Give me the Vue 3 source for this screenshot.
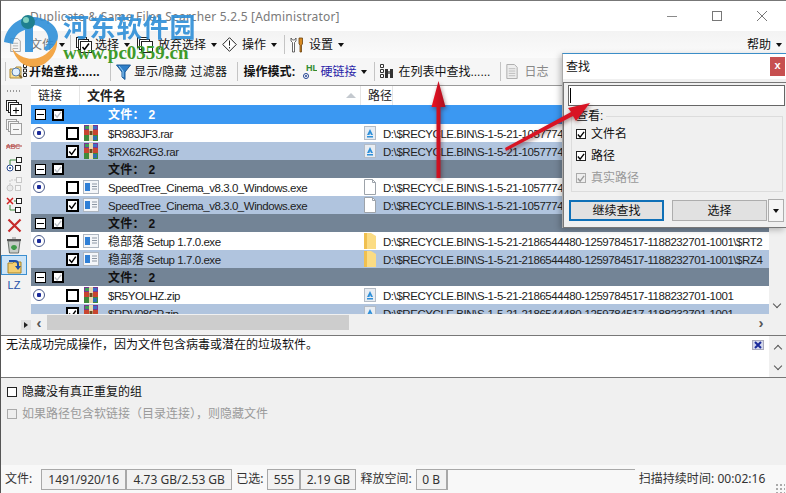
<template>
  <div class="win">
    <svg class="defs" width="0" height="0">
      <symbol id="i-rar" viewBox="0 0 16 16">
        <rect x="1" y="0" width="14" height="5" fill="#7a3590" />
        <rect x="1" y="5" width="14" height="5" fill="#c8452f" />
        <rect x="1" y="10" width="14" height="6" fill="#3f8a3a" />
        <rect x="2" y="1" width="4" height="3" fill="#3d9a58" />
        <rect x="10" y="1" width="4" height="3" fill="#3d6fc4" />
        <rect x="10" y="11" width="4" height="4" fill="#2f6fb0" />
        <rect x="6" y="0" width="4" height="16" fill="#e8d8b0" />
        <rect x="6.5" y="6" width="3" height="4" fill="#6b4a20" />
      </symbol>
      <symbol id="i-exe" viewBox="0 0 16 16">
        <rect x="0.5" y="1.5" width="15" height="13" fill="#f4f6f9" stroke="#aeb6c0" />
        <rect x="2" y="4" width="5" height="8" fill="#2f7fd6" />
        <path d="M9 5h5M9 7.5h5M9 10h5" stroke="#8c96a3" />
      </symbol>
      <symbol id="i-bin" viewBox="0 0 12 14">
        <rect x="0.5" y="0.5" width="11" height="13" fill="#e8edf3" stroke="#b4bcc6" />
        <path d="M6 3L3 9h2.500L6 7l1 2h2z M3 10h6v1.400H3z" fill="#2f8fd8" />
      </symbol>
      <symbol id="i-doc" viewBox="0 0 12 16">
        <path d="M.5.5h8l3 3v12H.5z" fill="#fff" stroke="#9da3aa" />
        <path d="M8.500.5v3h3" fill="none" stroke="#9da3aa" />
      </symbol>
      <symbol id="i-folder" viewBox="0 0 12 16">
        <path d="M0 0h7l5 3v13H0z" fill="#fbdc84" />
        <path d="M0 0h3v16H0z" fill="#f0c050" />
      </symbol>
      <symbol id="i-stack" viewBox="0 0 16 16">
        <rect x="0.5" y="0.5" width="10" height="10" fill="#fff" stroke="#222" />
        <rect x="2.500" y="2.500" width="10" height="10" fill="#fff" stroke="#222" />
        <rect x="4.500" y="4.500" width="11" height="11" fill="#fff" stroke="#222" />
      </symbol>
    </svg>

    <header class="titlebar">
      <span class="title">Duplicate &amp; Same Files Searcher 5.2.5 [Administrator]</span>
      <div class="win-btns">
        <svg width="12" height="12" viewBox="0 0 12 12"><path d="M1 6.500h10" stroke="#8a8a8a" /></svg>
        <svg width="12" height="12" viewBox="0 0 12 12"><rect x="1.500" y="1.500" width="9" height="9" fill="none" stroke="#777" /></svg>
        <svg width="12" height="12" viewBox="0 0 12 12"><path d="M1 1l10 10M11 1L1 11" stroke="#777" /></svg>
      </div>
    </header>

    <nav class="menubar">
      <div class="mi mi-tight">
        <svg width="11" height="14" viewBox="0 0 12 16"><path d="M.5.5h8l3 3v12H.5z" fill="#f5f5f5" stroke="#999" /><path d="M3 6h6M3 9h6M3 12h6" stroke="#aaa" /></svg>
        <span class="dim">文件</span><i class="caret"></i>
      </div>
      <b class="sep"></b>
      <div class="mi">
        <svg width="16" height="16" viewBox="0 0 16 16"><use href="#i-stack" /><path d="M6.500 10l2 2.500 4.500-6" fill="none" stroke="#000" stroke-width="1.500" /></svg>
        <span>选择</span><i class="caret"></i>
      </div>
      <div class="mi mi-tight">
        <svg width="16" height="16" viewBox="0 0 16 16"><use href="#i-stack" /></svg>
        <span class="wide-gap">放弃选择</span><i class="caret"></i>
      </div>
      <div class="mi">
        <svg width="15" height="15" viewBox="0 0 15 15"><path d="M7.500.7l6.800 6.800-6.800 6.800L.7 7.500z" fill="#fff" stroke="#222" /><path d="M7.500 3.500v5.200M7.500 10v1.400" stroke="#222" /></svg>
        <span class="wide-gap">操作</span><i class="caret"></i>
      </div>
      <b class="sep"></b>
      <div class="mi">
        <svg width="14" height="16" viewBox="0 0 14 16"><path d="M1 1v3l1.500 1.500V15h2V5.500L6 4V1L4.500 3h-2z" fill="#fff" stroke="#444" stroke-width=".8" /><path d="M9 1h3.500v6L11.500 8v7h-1.500V8L9 7z" fill="#d98a20" stroke="#6a4210" stroke-width=".8" /></svg>
        <span class="wide-gap">设置</span><i class="caret"></i>
      </div>
      <div class="mi mi-help"><span>帮助</span><i class="caret"></i></div>
    </nav>

    <div class="toolbar">
      <b class="sep"></b>
      <div class="ti ti-first">
        <svg width="18" height="16" viewBox="0 0 18 16"><path d="M1 5h5l1-2h5v11H1z" fill="#f6dc90" stroke="#b08a30" /><circle cx="7" cy="8" r="4" fill="#dff0ff" stroke="#5b7fa8" /><path d="M10 11l3 3" stroke="#8a6a30" stroke-width="2" /><path d="M14.500.5h3v3h-3zM14.500 5h3v3h-3zM14.500 9.500h3v3h-3z" fill="#fff" stroke="#222" /></svg>
        <span class="bold">开始查找......</span>
      </div>
      <b class="sep"></b>
      <div class="ti">
        <svg width="15" height="16" viewBox="0 0 15 16"><path d="M.5 1h14L9 8v7.500L6 13V8z" fill="#2f7fc8" stroke="#1c5a96" /><path d="M3 2l4 5v6" fill="none" stroke="#9cd0f5" /></svg>
        <span class="spread">显示/隐藏 过滤器</span>
      </div>
      <b class="sep"></b>
      <div class="ti ti-mode">
        <span class="bold">操作模式:</span>
        <svg class="hl" width="14" height="17" viewBox="0 0 14 17"><text x="3" y="8" class="hl-text">HL</text><circle cx="3" cy="13" r="2.500" fill="#fff" stroke="#1f3f8f" /><circle cx="3" cy="13" r="1" fill="#1f3f8f" /></svg>
        <span class="link">硬链接</span><i class="caret"></i>
      </div>
      <b class="sep"></b>
      <div class="ti">
        <svg width="15" height="15" viewBox="0 0 15 15"><path d="M.5.500h3v3h-3zM.5 5.500h3v3h-3zM.5 10.500h3v3h-3z" fill="#fff" stroke="#333" /><path d="M5 5h3v9H5zM10 5h3v9h-3z" fill="#333" /><path d="M8 7h2v3H8z" fill="#777" /></svg>
        <span>在列表中查找......</span>
      </div>
      <b class="sep"></b>
      <div class="ti ti-off">
        <svg width="12" height="15" viewBox="0 0 12 16"><path d="M.5.5h8l3 3v12H.5z" fill="#eee" stroke="#aaa" /><path d="M2.500 5h7M2.500 7.500h7M2.500 10h7M2.500 12.500h7" stroke="#bbb" /></svg>
        <span>日志</span>
      </div>
    </div>

    <section class="list-area">
      <aside class="side">
        <div class="dots"></div>
        <div class="tool t19"><svg width="16" height="16" viewBox="0 0 16 16"><use href="#i-stack" /><path d="M10 7.500v6M7 10.500h6" stroke="#000" /></svg></div>
        <div class="tool t19 faded"><svg width="16" height="16" viewBox="0 0 16 16"><use href="#i-stack" /><path d="M7 10.500h6" stroke="#000" /></svg></div>
        <div class="tool t19">
          <svg width="16" height="10" viewBox="0 0 16 10"><text x="0" y="8" class="abc">ABC</text><path d="M0 5h16" stroke="#b04040" /></svg>
        </div>
        <div class="tool">
          <svg width="16" height="16" viewBox="0 0 16 16"><circle cx="4" cy="11" r="3" fill="#fff" stroke="#2a4a8f" /><circle cx="4" cy="11" r="1" fill="#2a4a8f" /><rect x="9.500" y="8.500" width="5" height="5" fill="#fff" stroke="#222" /><rect x="10.500" y=".5" width="5" height="5" fill="#fff" stroke="#222" /><path d="M4 8V3h6" fill="none" stroke="#3a8a3a" /></svg>
        </div>
        <div class="tool faded">
          <svg width="16" height="16" viewBox="0 0 16 16"><circle cx="4" cy="11" r="3" fill="#ddd" stroke="#888" /><rect x="9.500" y="8.500" width="5" height="5" fill="#fff" stroke="#888" /><rect x="10.500" y=".5" width="5" height="5" fill="#fff" stroke="#888" /><path d="M4 8V3h6" fill="none" stroke="#888" stroke-dasharray="2 1" /></svg>
        </div>
        <div class="tool">
          <svg width="16" height="16" viewBox="0 0 16 16"><path d="M1 1l6 6M7 1L1 7" stroke="#d02020" stroke-width="1.500" /><rect x="10.500" y="1.500" width="5" height="5" fill="#fff" stroke="#222" /><rect x="9.500" y="10.500" width="5" height="5" fill="#fff" stroke="#222" /><path d="M4 8v5h5M8 4h2" fill="none" stroke="#3a8a3a" /></svg>
        </div>
        <div class="tool">
          <svg width="15" height="15" viewBox="0 0 15 15"><path d="M1.500 1.500l12 12M13.500 1.500l-12 12" stroke="#c62a2a" stroke-width="2.200" /></svg>
        </div>
        <div class="tool">
          <svg width="16" height="17" viewBox="0 0 16 17"><path d="M2 4h12l-1.500 12h-9z" fill="#c7cdc8" stroke="#6a706c" /><path d="M1 3h14" stroke="#555" stroke-width="2" /><path d="M6 1h4" stroke="#888" /><path d="M5 11a3 3 0 0 1 6 0l-2 2H7z" fill="#3f9a4a" /></svg>
        </div>
        <div class="tool on">
          <svg width="17" height="17" viewBox="0 0 17 17"><path d="M2 6h5l1-1h7v11H2z" fill="#f3cf72" stroke="#a88428" /><path d="M3 4h6a3 3 0 0 1 3 3v3" fill="none" stroke="#1d4fa8" stroke-width="2" /><path d="M9 9h6l-3 4z" fill="#1d4fa8" /></svg>
        </div>
        <div class="tool lz">LZ</div>
        <div class="side-fill"></div>
        <div class="side-toggle"><i></i></div>
      </aside>

      <div class="grid-wrap">
        <div class="grid-main">
          <div class="grid-head">
            <div class="hc hc-link">链接</div>
            <div class="hc hc-name">文件名<i class="sort"></i></div>
            <div class="hc hc-path">路径</div>
          </div>
          <div class="grid-body">
            <template v-for="(row, i) in rows" :key="i">
              <div v-if="row.group" class="row group" :class="{ active: row.active }">
                <span class="box minus"></span>
                <span class="box tick"><svg width="9" height="9" viewBox="0 0 9 9"><path d="M1 4.500l2.500 3L8 1.500" fill="none" stroke="#b9bec4" stroke-width="1.500" /></svg></span>
                <span class="gtext">文件： 2</span>
              </div>
              <div v-else class="row" :class="{ sel: row.checked }">
                <span class="radio-cell"><i v-if="!row.checked" class="radio"></i></span>
                <span class="rcheck">
                  <svg v-if="row.checked" width="11" height="11" viewBox="0 0 11 11"><path d="M1.500 5.500l3 3.500 5-7" fill="none" stroke="#000" stroke-width="1.800" /></svg>
                </span>
                <svg class="ficon" width="16" height="16"><use :href="'#i-' + row.icon" /></svg>
                <span class="fname"><span v-if="row.prefix" class="cjk">{{ row.prefix }}</span>{{ row.name }}</span>
                <svg class="picon" width="12" height="16"><use :href="'#i-' + row.picon" /></svg>
                <span class="fpath">{{ row.path }}</span>
              </div>
            </template>
          </div>
          <div class="hscroll">
            <span class="arrow">‹</span>
            <div class="hthumb"></div>
            <span class="arrow">›</span>
          </div>
        </div>
        <div class="vscroll"><span class="chev down"></span></div>
      </div>
    </section>

    <section class="msg">
      <p>无法成功完成操作，因为文件包含病毒或潜在的垃圾软件。</p>
      <span class="msg-close"><svg width="8" height="8" viewBox="0 0 8 8"><path d="M1 1l6 6M7 1L1 7" stroke="#1a2a9a" stroke-width="2" /></svg></span>
      <div class="msg-scroll"><span class="chev up"></span><span class="chev down"></span></div>
    </section>

    <section class="options">
      <label class="opt"><span class="cb"></span>隐藏没有真正重复的组</label>
      <label class="opt off"><span class="cb"></span>如果路径包含软链接（目录连接），则隐藏文件</label>
    </section>

    <footer class="status">
      <span class="st-label">文件:</span>
      <span class="st-box w-a">1491/920/16</span><span class="st-box w-b">4.73 GB/2.53 GB</span>
      <span class="st-label">已选:</span>
      <span class="st-box w-c">555</span><span class="st-box w-d">2.19 GB</span>
      <span class="st-label">释放空间:</span>
      <span class="st-box w-e">0 B</span><span class="st-box w-f"></span>
      <span class="st-label st-time">扫描持续时间: 00:02:16</span>
      <span class="grip"></span>
    </footer>

    <div class="watermark">
      <svg class="wm-logo" width="58" height="60" viewBox="0 0 58 60">
        <path d="M2 34C4 18 18 8 32 9c14 1 24 10 24 19 0 7-5 13-12 15l-2-3c4-3 5-7 4-12-2-7-9-11-15-11v27h-8V22C15 24 12 30 11 36z" fill="#2e8fd8" opacity=".9" />
        <path d="M10 40c8 12 24 14 34 6 5-4 9-9 11-14 1 10-5 20-15 25-12 5-25 0-30-17z" fill="#f3a748" />
        <circle cx="26" cy="14" r="7" fill="#1e7f8f" />
        <circle cx="24" cy="12" r="3" fill="#7fd0c0" />
      </svg>
      <div class="wm-cn">河东软件园</div>
      <div class="wm-url">www.pc0359.cn</div>
    </div>

    <div class="dialog">
      <div class="dlg-title">
        <span>查找</span>
        <span class="dlg-close">x</span>
      </div>
      <div class="dlg-body">
        <div class="dlg-input"><i></i></div>
        <fieldset class="dlg-group">
          <legend>查看:</legend>
          <label class="dlg-check"><span class="cb on"><svg width="9" height="9" viewBox="0 0 9 9"><path d="M1 4.500l2.500 3L8 1.500" fill="none" stroke="#000" stroke-width="1.500" /></svg></span>文件名</label>
          <label class="dlg-check"><span class="cb on"><svg width="9" height="9" viewBox="0 0 9 9"><path d="M1 4.500l2.500 3L8 1.500" fill="none" stroke="#000" stroke-width="1.500" /></svg></span>路径</label>
          <label class="dlg-check off"><span class="cb on"><svg width="9" height="9" viewBox="0 0 9 9"><path d="M1 4.500l2.500 3L8 1.500" fill="none" stroke="#999" stroke-width="1.500" /></svg></span>真实路径</label>
        </fieldset>
        <div class="dlg-btns">
          <button class="btn primary">继续查找</button>
          <button class="btn">选择</button>
          <button class="btn-drop"><i class="caret"></i></button>
        </div>
      </div>
    </div>

    <svg class="arrows" width="786" height="493" viewBox="0 0 786 493">
      <defs>
        <linearGradient id="red-v" x1="0" x2="1" y1="0" y2="0">
          <stop offset="0" stop-color="#f01020" />
          <stop offset="1" stop-color="#a81020" />
        </linearGradient>
      </defs>
      <g class="shade">
        <path d="M436.500 178V107h-5l7-26 7 26h-5v71z" fill="url(#red-v)" />
        <path d="M505 148l66-36-3-4 22-5-14 18-3-5-67 35z" fill="#d81424" />
      </g>
    </svg>
  </div>
</template>

<script setup>
const oldBase = 'D:\\$RECYCLE.BIN\\S-1-5-21-1057774'
const newBase = 'D:\\$RECYCLE.BIN\\S-1-5-21-2186544480-1259784517-1188232701-1001'

const rows = [
  { group: true, active: true },
  { name: '$R983JF3.rar', icon: 'rar', picon: 'bin', path: oldBase },
  { name: '$RX62RG3.rar', icon: 'rar', picon: 'bin', path: oldBase, checked: true },
  { group: true },
  { name: 'SpeedTree_Cinema_v8.3.0_Windows.exe', icon: 'exe', picon: 'doc', path: oldBase },
  { name: 'SpeedTree_Cinema_v8.3.0_Windows.exe', icon: 'exe', picon: 'doc', path: oldBase, checked: true },
  { group: true },
  { prefix: '稳部落', name: ' Setup 1.7.0.exe', icon: 'exe', picon: 'folder', path: newBase + '\\$RT2' },
  { prefix: '稳部落', name: ' Setup 1.7.0.exe', icon: 'exe', picon: 'folder', path: newBase + '\\$RZ4', checked: true },
  { group: true },
  { name: '$R5YOLHZ.zip', icon: 'rar', picon: 'bin', path: newBase },
  { name: '$RDV08CP.zip', icon: 'rar', picon: 'bin', path: newBase, checked: true }
]
</script>

<style>
html,
body {
  margin: 0;
  padding: 0;
  overflow: hidden;
  background: #f0f0f0;
}
</style>

<style scoped>
.win {
  position: relative;
  width: 786px;
  height: 493px;
  overflow: hidden;
  display: flex;
  flex-direction: column;
  box-sizing: border-box;
  border-left: 1px solid #555;
  border-top: 1px solid #777;
  background: #f0f0f0;
  color: #111;
  font: 12px/16px "Liberation Sans", "Noto Sans CJK SC", sans-serif;
}

.defs {
  position: absolute;
}

.titlebar {
  height: 30px;
  flex: none;
  display: flex;
  align-items: center;
  justify-content: space-between;
  background: #fff;
  padding-left: 29px;
}

.title {
  color: #7a7a7a;
  font-family: "Noto Sans", "Noto Sans CJK SC", sans-serif;
  font-size: 12px;
  letter-spacing: 0.19px;
  padding-top: 1px;
}

.win-btns {
  display: flex;
  gap: 33px;
  padding-right: 18px;
}

.menubar {
  height: 27px;
  flex: none;
  display: flex;
  align-items: center;
  padding-left: 9px;
  background: linear-gradient(#f3f3f3, #fbfbfb);
}

.mi {
  display: flex;
  align-items: center;
  gap: 3px;
  margin-right: 7px;
}

.mi-tight {
  margin-right: 5px;
}

.dim {
  color: #777;
  margin-left: 6px;
}

.wide-gap {
  margin-left: 2px;
}

.mi-help {
  margin: 0 4px 0 auto;
}

.caret {
  display: inline-block;
  width: 0;
  height: 0;
  margin-left: 2px;
  border: 3.500px solid transparent;
  border-top: 4px solid #111;
  border-bottom: 0;
}

.sep {
  width: 1px;
  height: 19px;
  background: #c4c4c4;
  margin: 0 5px 0 0;
}

.toolbar {
  height: 27px;
  flex: none;
  display: flex;
  align-items: center;
  padding-left: 4px;
  background: #f6f6f6;
}

.ti {
  display: flex;
  align-items: center;
  gap: 3px;
  margin-right: 10px;
}

.ti-first {
  gap: 2px;
  margin-left: -2px;
}

.ti-first .bold {
  letter-spacing: 0.3px;
}

.ti-mode {
  margin-right: 7px;
}

.spread {
  letter-spacing: 0.3px;
}

.bold {
  font-weight: 700;
}

.link {
  color: #2a1fa8;
}

.hl {
  margin-left: 5px;
}

.hl-text {
  font: 700 9px "Liberation Sans", sans-serif;
  fill: #2f8a2f;
}

.ti-off {
  color: #888;
  gap: 6px;
}

.list-area {
  height: 248px;
  flex: none;
  display: flex;
}

.side {
  width: 30px;
  flex: none;
  display: flex;
  flex-direction: column;
  align-items: center;
  background: #f2f2f2;
}

.dots {
  width: 14px;
  height: 2px;
  margin: 5px 5px 6px 0;
  background: repeating-linear-gradient(90deg, #999 0 1px, transparent 1px 3px);
}

.tool {
  width: 26px;
  height: 20px;
  flex: none;
  margin-right: 4px;
  display: flex;
  align-items: center;
  justify-content: center;
  box-sizing: border-box;
}

.t19 {
  height: 19px;
}

.faded {
  opacity: 0.4;
}

.on {
  background: #cce4f7;
  border: 1px solid #3c8fd0;
}

.abc {
  font: 400 7px "Liberation Sans", sans-serif;
  fill: #b04040;
}

.lz {
  color: #1f4fa8;
  font-size: 11px;
  font-family: "Liberation Sans", sans-serif;
}

.side-fill {
  flex: 1;
}

.side-toggle {
  align-self: flex-end;
  width: 10px;
  height: 10px;
  margin-bottom: 3px;
  background: #e0e0e0;
  display: flex;
  align-items: center;
  justify-content: center;
}

.side-toggle i {
  width: 0;
  height: 0;
  border: 3px solid transparent;
  border-left: 4px solid #222;
  border-right: 0;
}

.grid-wrap {
  flex: 1;
  min-width: 0;
  display: flex;
}

.grid-main {
  width: 738px;
  flex: none;
  display: flex;
  flex-direction: column;
}

.grid-head {
  height: 20px;
  flex: none;
  display: flex;
  background: #fff;
  box-sizing: border-box;
  border-top: 1px solid #999;
  align-items: center;
  color: #222;
}

.hc {
  height: 100%;
  box-sizing: border-box;
  padding-left: 7px;
  border-right: 1px solid #e5e5e5;
  display: flex;
  align-items: center;
}

.hc-link {
  width: 49px;
}

.hc-name {
  width: 281px;
  font-weight: 700;
  font-size: 13px;
  position: relative;
}

.sort {
  position: absolute;
  right: 4px;
  top: 7px;
  width: 0;
  height: 0;
  border: 5px solid transparent;
  border-bottom: 5px solid #c4c9cf;
  border-top: 0;
}

.grid-body {
  height: 209px;
  flex: none;
  overflow: hidden;
  background: #fff;
}

.row {
  height: 18px;
  display: flex;
  align-items: center;
  white-space: pre;
  color: #222;
}

.row.sel {
  background: #b0c4de;
}

.row.group {
  background: #738496;
  color: #111;
}

.row.group.active {
  height: 19px;
  background: #3b98f2;
  color: #fff;
}

.box {
  width: 11px;
  height: 11px;
  box-sizing: border-box;
  border: 1px solid #000;
  background: #fff;
  flex: none;
  display: flex;
  align-items: center;
  justify-content: center;
}

.minus {
  margin-left: 4px;
  position: relative;
}

.minus::after {
  content: "";
  width: 7px;
  height: 1px;
  background: #000;
}

.tick {
  width: 12px;
  height: 12px;
  margin-left: 6px;
  border-width: 2px;
}

.gtext {
  margin-left: 44px;
  font-weight: 700;
  letter-spacing: 0.3px;
  padding-top: 1px;
}

.radio-cell {
  width: 35px;
  flex: none;
  display: flex;
  padding-left: 2px;
  box-sizing: border-box;
}

.radio {
  width: 12px;
  height: 12px;
  box-sizing: border-box;
  border-radius: 50%;
  border: 1px solid #4a5a8a;
  background: radial-gradient(circle, #1a2a9a 0 2px, #fff 2.500px);
}

.rcheck {
  width: 13px;
  height: 13px;
  flex: none;
  box-sizing: border-box;
  border: 2px solid #000;
  background: #fff;
  display: flex;
  align-items: center;
  justify-content: center;
}

.ficon {
  margin-left: 4px;
  flex: none;
}

.fname {
  width: 253px;
  flex: none;
  margin-left: 9px;
  padding-top: 1px;
  font-size: 11.500px;
  letter-spacing: -0.45px;
}

.cjk {
  font-size: 12px;
  letter-spacing: 0;
}

.picon {
  flex: none;
  margin-left: 3px;
}

.fpath {
  margin-left: 7px;
  padding-top: 1px;
  font-size: 11.500px;
  letter-spacing: -0.44px;
}

.hscroll {
  height: 19px;
  flex: none;
  display: flex;
  align-items: flex-start;
  padding-top: 1px;
  box-sizing: border-box;
  background: #f0f0f0;
  color: #555;
}

.arrow {
  width: 16px;
  text-align: center;
  font-weight: 700;
  font-size: 15px;
}

.hthumb {
  width: 302px;
  height: 15px;
  background: #cdcdcd;
  margin-right: auto;
}

.vscroll {
  flex: 1;
  position: relative;
  background: #f0f0f0;
}

.vscroll .chev {
  position: absolute;
  left: 5px;
  top: 216px;
}

.chev {
  display: block;
  width: 5px;
  height: 5px;
  border-left: 1.500px solid #555;
  border-bottom: 1.500px solid #555;
}

.chev.down {
  transform: rotate(-45deg);
}

.chev.up {
  transform: rotate(135deg);
}

.msg {
  height: 43px;
  flex: none;
  margin-top: 2px;
  box-sizing: border-box;
  border-top: 1px solid #777;
  border-bottom: 1px solid #777;
  background: #fff;
  display: flex;
  position: relative;
}

.msg p {
  margin: 0;
  padding: 1px 0 0 5px;
  flex: 1;
}

.msg-close {
  position: absolute;
  right: 22px;
  top: 4px;
  width: 12px;
  height: 10px;
  background: #d4d8ec;
  border: 1px solid #aab;
  box-sizing: border-box;
  display: flex;
  align-items: center;
  justify-content: center;
}

.msg-scroll {
  width: 17px;
  background: #f0f0f0;
  display: flex;
  flex-direction: column;
  align-items: center;
  justify-content: space-between;
  padding: 10px 0 8px;
  box-sizing: border-box;
}

.options {
  flex: 1;
  display: flex;
  flex-direction: column;
  gap: 6px;
  padding: 6px 0 0 6px;
}

.opt {
  display: flex;
  align-items: center;
  gap: 5px;
}

.opt.off {
  color: #9a9a9a;
}

.cb {
  width: 10px;
  height: 10px;
  box-sizing: border-box;
  border: 1px solid #222;
  background: #fff;
  flex: none;
  display: flex;
  align-items: center;
  justify-content: center;
}

.off .cb {
  border-color: #aaa;
  background: #eee;
}

.status {
  height: 28px;
  flex: none;
  display: flex;
  align-items: center;
  padding-left: 4px;
  background: #f8f8f8;
  font-family: "Noto Sans", "Noto Sans CJK SC", sans-serif;
  color: #333;
}

.st-label {
  margin-right: 4px;
}

.st-box {
  height: 21px;
  box-sizing: border-box;
  border: 1px solid #a8a8a8;
  background: #f2f2f2;
  line-height: 19px;
  text-align: center;
}

.w-a {
  width: 85px;
  margin-left: 5px;
}

.w-b {
  width: 106px;
  margin-right: 4px;
}

.w-c {
  width: 33px;
}

.w-d {
  width: 56px;
  margin-right: 4px;
}

.w-e {
  width: 31px;
}

.w-f {
  width: 188px;
  background: #f8f8f8;
  border-right: 0;
  border-bottom: 0;
  margin-right: 4px;
}

.st-time {
  margin-right: 0;
  letter-spacing: 0.05px;
}

.grip {
  margin-left: auto;
  margin-right: 1px;
  align-self: flex-end;
  width: 10px;
  height: 10px;
  background: radial-gradient(circle, #aaa 1px, transparent 1.200px) 0 0 / 4px 4px;
}

.watermark {
  position: absolute;
  left: 1px;
  top: 7px;
  width: 200px;
  height: 60px;
  pointer-events: none;
}

.wm-logo {
  position: absolute;
  left: 0;
  top: 0;
}

.wm-cn {
  position: absolute;
  left: 61px;
  top: 4px;
  color: #2e8fd8;
  opacity: 0.9;
  font: 700 26px/28px "Noto Sans CJK SC", sans-serif;
  letter-spacing: 0.6px;
}

.wm-url {
  position: absolute;
  left: 61px;
  top: 36px;
  color: #3f9a2a;
  font: 700 19px/18px "Liberation Serif", serif;
}

.dialog {
  position: absolute;
  left: 561px;
  top: 52px;
  width: 224px;
  height: 175px;
  box-sizing: border-box;
  border-top: 1px solid #3b8ec8;
  border-left: 1px solid #aaa;
  background: #f0f0f0;
  box-shadow: -2px 2px 6px rgba(0, 0, 0, 0.25);
}

.dlg-title {
  height: 25px;
  background: #fff;
  display: flex;
  align-items: center;
  justify-content: space-between;
  padding-left: 3px;
}

.dlg-close {
  width: 15px;
  height: 19px;
  margin-right: 1px;
  background: #c75050;
  color: #fff;
  text-align: center;
  font-weight: 700;
  font-size: 11px;
  line-height: 17px;
}

.dlg-body {
  margin-top: 3px;
  height: 146px;
  box-sizing: border-box;
  border-left: 1px solid #777;
  border-top: 1px solid #777;
  border-bottom: 1px solid #777;
  padding: 2px 1px 0 4px;
}

.dlg-input {
  height: 21px;
  box-sizing: border-box;
  border: 1px solid #666;
  background: #fff;
  padding: 2px 1px;
}

.dlg-input i {
  display: block;
  width: 1px;
  height: 15px;
  background: #000;
}

.dlg-group {
  margin: 4px 2px 0 3px;
  padding: 1px 0 0 4px;
  height: 82px;
  box-sizing: border-box;
  border: 1px solid #dcdcdc;
  position: relative;
}

.dlg-group legend {
  padding: 0 3px 0 0;
  line-height: 12px;
}

.dlg-check {
  display: flex;
  align-items: center;
  gap: 5px;
  height: 22px;
}

.dlg-check.off {
  color: #999;
}

.dlg-btns {
  display: flex;
  align-items: center;
  margin-top: 7px;
  padding-left: 1px;
}

.btn {
  width: 95px;
  height: 21px;
  box-sizing: border-box;
  border: 1px solid #adadad;
  background: #e1e1e1;
  padding: 0;
  margin-right: 8px;
  font: inherit;
  color: #111;
}

.btn.primary {
  border: 2px solid #0f70b7;
}

.btn + .btn {
  margin-right: 1px;
}

.btn-drop {
  width: 16px;
  height: 23px;
  box-sizing: border-box;
  border: 1px solid #adadad;
  background: #f5f5f5;
  padding: 0;
  display: flex;
  align-items: center;
  justify-content: center;
}

.btn-drop .caret {
  margin: 0;
}

.arrows {
  position: absolute;
  left: -1px;
  top: -1px;
  pointer-events: none;
}

.shade {
  filter: drop-shadow(1px 2px 2px rgba(60, 0, 0, 0.45));
}
</style>
